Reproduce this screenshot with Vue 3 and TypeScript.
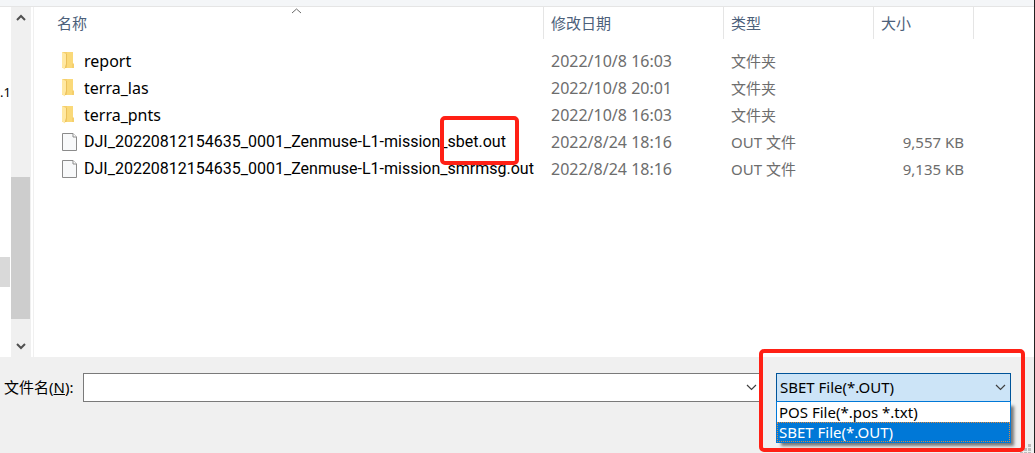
<script setup lang="ts">
import { ref } from 'vue'

interface Entry {
  name: string
  marked?: string
  kind: 'folder' | 'file'
  date: string
  type: string
  size: string
}

const entries: Entry[] = [
  { name: 'report', kind: 'folder', date: '2022/10/8 16:03', type: '文件夹', size: '' },
  { name: 'terra_las', kind: 'folder', date: '2022/10/8 20:01', type: '文件夹', size: '' },
  { name: 'terra_pnts', kind: 'folder', date: '2022/10/8 16:03', type: '文件夹', size: '' },
  { name: 'DJI_20220812154635_0001_Zenmuse-L1-mission_', marked: 'sbet.out', kind: 'file', date: '2022/8/24 18:16', type: 'OUT 文件', size: '9,557 KB' },
  { name: 'DJI_20220812154635_0001_Zenmuse-L1-mission_smrmsg.out', kind: 'file', date: '2022/8/24 18:16', type: 'OUT 文件', size: '9,135 KB' },
]

const fileTypes = ['POS File(*.pos *.txt)', 'SBET File(*.OUT)']
const fileType = ref('SBET File(*.OUT)')
const fileName = ref('')
const open = ref(true)

function choose(value: string) {
  fileType.value = value
  open.value = false
}
</script>

<template>
  <div class="dialog">
    <div class="toolbar"></div>
    <main class="body">
      <aside class="tree">
        <span class="tree-text">.1</span>
        <span class="tree-selected"></span>
      </aside>
      <div class="scrollbar">
        <button class="scroll-button" type="button" aria-label="向上滚动">
          <svg width="10" height="8" viewBox="0 0 10 8"><path d="M1 6 5 2 9 6" fill="none" stroke="#505050" stroke-width="2" /></svg>
        </button>
        <div class="track"><div class="thumb"></div></div>
        <button class="scroll-button" type="button" aria-label="向下滚动">
          <svg width="10" height="8" viewBox="0 0 10 8"><path d="M1 2 5 6 9 2" fill="none" stroke="#505050" stroke-width="2" /></svg>
        </button>
      </div>
      <section class="files">
        <table>
          <colgroup>
            <col />
            <col class="col-date" />
            <col class="col-type" />
            <col class="col-size" />
            <col class="col-rest" />
          </colgroup>
          <thead>
            <tr>
              <th class="name-head">
                名称
                <svg class="sort" width="11" height="6" viewBox="0 0 11 6"><path d="M1 5 5.5 1 10 5" fill="none" stroke="#6a6a6a" /></svg>
              </th>
              <th>修改日期</th>
              <th>类型</th>
              <th>大小</th>
              <td></td>
            </tr>
          </thead>
          <tbody>
            <tr v-for="entry in entries" :key="entry.name">
              <td class="name">
                <div class="name-line" :class="entry.kind">
                  <svg v-if="entry.kind === 'folder'" class="icon" width="16" height="18" viewBox="0 0 16 18">
                    <path d="M1 0H12V11L13 12V16H1Z" fill="#f5cf6c" />
                    <path d="M6 0H12V11L11 12V16H6Z" fill="#fad979" />
                    <path d="M1 0 5 2V12L4 17.500 1 15.500Z" fill="#ffe8a2" />
                    <path d="M5.500 2V12L4.500 16" fill="none" stroke="#eac05a" />
                  </svg>
                  <svg v-else class="icon" width="16" height="18" viewBox="0 0 16 18">
                    <path d="M1.500 .5H12L15.500 4V17.500H1.500Z" fill="#f8f9fa" stroke="#8b8b8b" />
                    <path d="M12 .5V4H15.500" fill="#fff" stroke="#8b8b8b" />
                  </svg>
                  <span>{{ entry.name }}<span v-if="entry.marked" class="marked">{{ entry.marked }}</span></span>
                </div>
              </td>
              <td>{{ entry.date }}</td>
              <td class="type">{{ entry.type }}</td>
              <td class="size">{{ entry.size }}</td>
              <td></td>
            </tr>
          </tbody>
        </table>
      </section>
    </main>
    <footer class="footer">
      <label for="file-name">文件名(<u>N</u>):</label>
      <div class="combo name-combo">
        <input id="file-name" v-model="fileName" type="text" />
        <svg class="chevron" width="11" height="7" viewBox="0 0 11 7"><path d="M1 1 5.500 5.500 10 1" fill="none" stroke="#404040" stroke-width="1.200" /></svg>
      </div>
      <div class="combo type-combo">
        <select v-model="fileType" aria-label="文件类型" @mousedown.prevent="open = !open">
          <option v-for="item in fileTypes" :key="item">{{ item }}</option>
        </select>
        <svg class="chevron" width="11" height="7" viewBox="0 0 11 7"><path d="M1 1 5.500 5.500 10 1" fill="none" stroke="#404040" stroke-width="1.200" /></svg>
        <div v-if="open" class="menu" role="listbox" aria-label="文件类型">
          <button
            v-for="item in fileTypes"
            :key="item"
            type="button"
            role="option"
            class="option"
            :class="{ selected: item === fileType }"
            :aria-selected="item === fileType"
            @click="choose(item)"
          >{{ item }}</button>
        </div>
      </div>
      <svg class="grip" width="12" height="10" viewBox="0 0 12 10" fill="#bdbdbd">
        <path d="M8 1h3v3H8zM4 5h3v3H4zM8 5h3v3H8zM0 9h3v1H0zM4 9h3v1H4zM8 9h3v1H8z" />
      </svg>
    </footer>
  </div>
</template>

<style>
body {
  margin: 0;
}
</style>

<style scoped>
.dialog {
  box-sizing: border-box;
  display: flex;
  flex-direction: column;
  min-height: 100vh;
  border-right: 1px solid #222;
  background: #fff;
  color: #000;
  font: 15px/20px "Noto Sans", "Noto Sans CJK SC", sans-serif;
}
.toolbar {
  height: 6px;
  background: #f4f6f8;
  border-bottom: 1px solid #e5e5e5;
}
.body {
  display: flex;
  flex: 1;
}
.tree {
  display: flex;
  flex-direction: column;
  width: 11px;
}
.tree-text {
  margin-top: 75px;
  font-size: 13px;
}
.tree-selected {
  width: 10px;
  height: 30px;
  margin-top: 155px;
  background: #d9d9d9;
}
.scrollbar {
  display: flex;
  flex-direction: column;
  width: 20px;
  background: #f0f0f0;
}
.scroll-button {
  display: flex;
  align-items: center;
  justify-content: center;
  height: 22px;
  padding: 0;
  border: 0;
  background: none;
}
.track {
  display: flex;
  flex: 1;
  flex-direction: column;
  justify-content: flex-end;
  padding-bottom: 16px;
}
.thumb {
  width: 19px;
  height: 142px;
  background: #cdcdcd;
}
.files {
  flex: 1;
  margin-left: 2px;
  border-left: 1px solid #f0f0f0;
}
table {
  width: 100%;
  table-layout: fixed;
  border-collapse: separate;
  border-spacing: 0;
}
.col-date {
  width: 180px;
}
.col-type {
  width: 150px;
}
.col-size {
  width: 100px;
}
.col-rest {
  width: 60px;
}
th {
  box-sizing: border-box;
  height: 32px;
  padding: 0 0 0 7px;
  border-right: 1px solid #e5e5e5;
  color: #4c607a;
  font-weight: 400;
  text-align: left;
}
.name-head {
  position: relative;
  padding-left: 23px;
}
.sort {
  position: absolute;
  top: 1px;
  left: calc(50% + 2px);
}
tbody::before {
  display: block;
  height: 8px;
  content: "";
}
tbody td {
  height: 27px;
  padding: 0 0 0 7px;
  color: #6d6d6d;
  font-size: 16px;
  white-space: nowrap;
}
tbody .type,
tbody .size {
  font-size: 15px;
}
tbody .size {
  padding-right: 10px;
  text-align: right;
}
tbody .name {
  padding-left: 27px;
  color: #000;
}
.name-line {
  display: flex;
  align-items: center;
  gap: 7px;
}
.file {
  font-family: Roboto, "Noto Sans CJK SC", sans-serif;
}
.icon {
  flex: none;
}
.marked {
  position: relative;
}
.marked::after {
  position: absolute;
  z-index: 1;
  inset: -16px -13px -14px -8px;
  border: 4px solid #ff2015;
  border-radius: 5px;
  content: "";
}
.footer {
  position: relative;
  display: flex;
  align-items: flex-start;
  height: 80px;
  padding: 16px 23px 0 4px;
  background: #f0f0f0;
}
label {
  width: 79px;
  line-height: 28px;
  white-space: nowrap;
}
.combo {
  position: relative;
  display: flex;
}
.name-combo {
  flex: 1;
  margin-right: 14px;
}
.type-combo {
  width: 235px;
}
.type-combo::after {
  position: absolute;
  z-index: 3;
  inset: -24px -14px -50px -17px;
  border: 4px solid #ff2015;
  border-radius: 5px;
  content: "";
  pointer-events: none;
}
input,
select {
  box-sizing: border-box;
  width: 100%;
  height: 29px;
  margin: 0;
  padding: 0 24px 2px 3px;
  border: 1px solid #7a7a7a;
  border-radius: 0;
  background: #fff;
  color: #000;
  font: inherit;
  outline: 0;
  appearance: none;
}
select {
  border-color: #005499;
  background: #cce4f7;
}
.chevron {
  position: absolute;
  top: 11px;
  right: 5px;
  pointer-events: none;
}
.menu {
  position: absolute;
  z-index: 2;
  top: 28px;
  right: 0;
  left: 0;
  border: 1px solid #0078d7;
  background: #fff;
  box-shadow: 4px 4px 3px -1px #777;
}
.option {
  display: block;
  box-sizing: border-box;
  width: 100%;
  height: 20px;
  padding: 0 2px;
  border: 0;
  background: #fff;
  color: #000;
  font: inherit;
  line-height: 20px;
  text-align: left;
}
.option.selected {
  outline: 1px dotted #e08a3c;
  outline-offset: -1px;
  background: #0078d7;
  color: #fff;
}
.grip {
  position: absolute;
  right: 2px;
  bottom: 0;
}
</style>
